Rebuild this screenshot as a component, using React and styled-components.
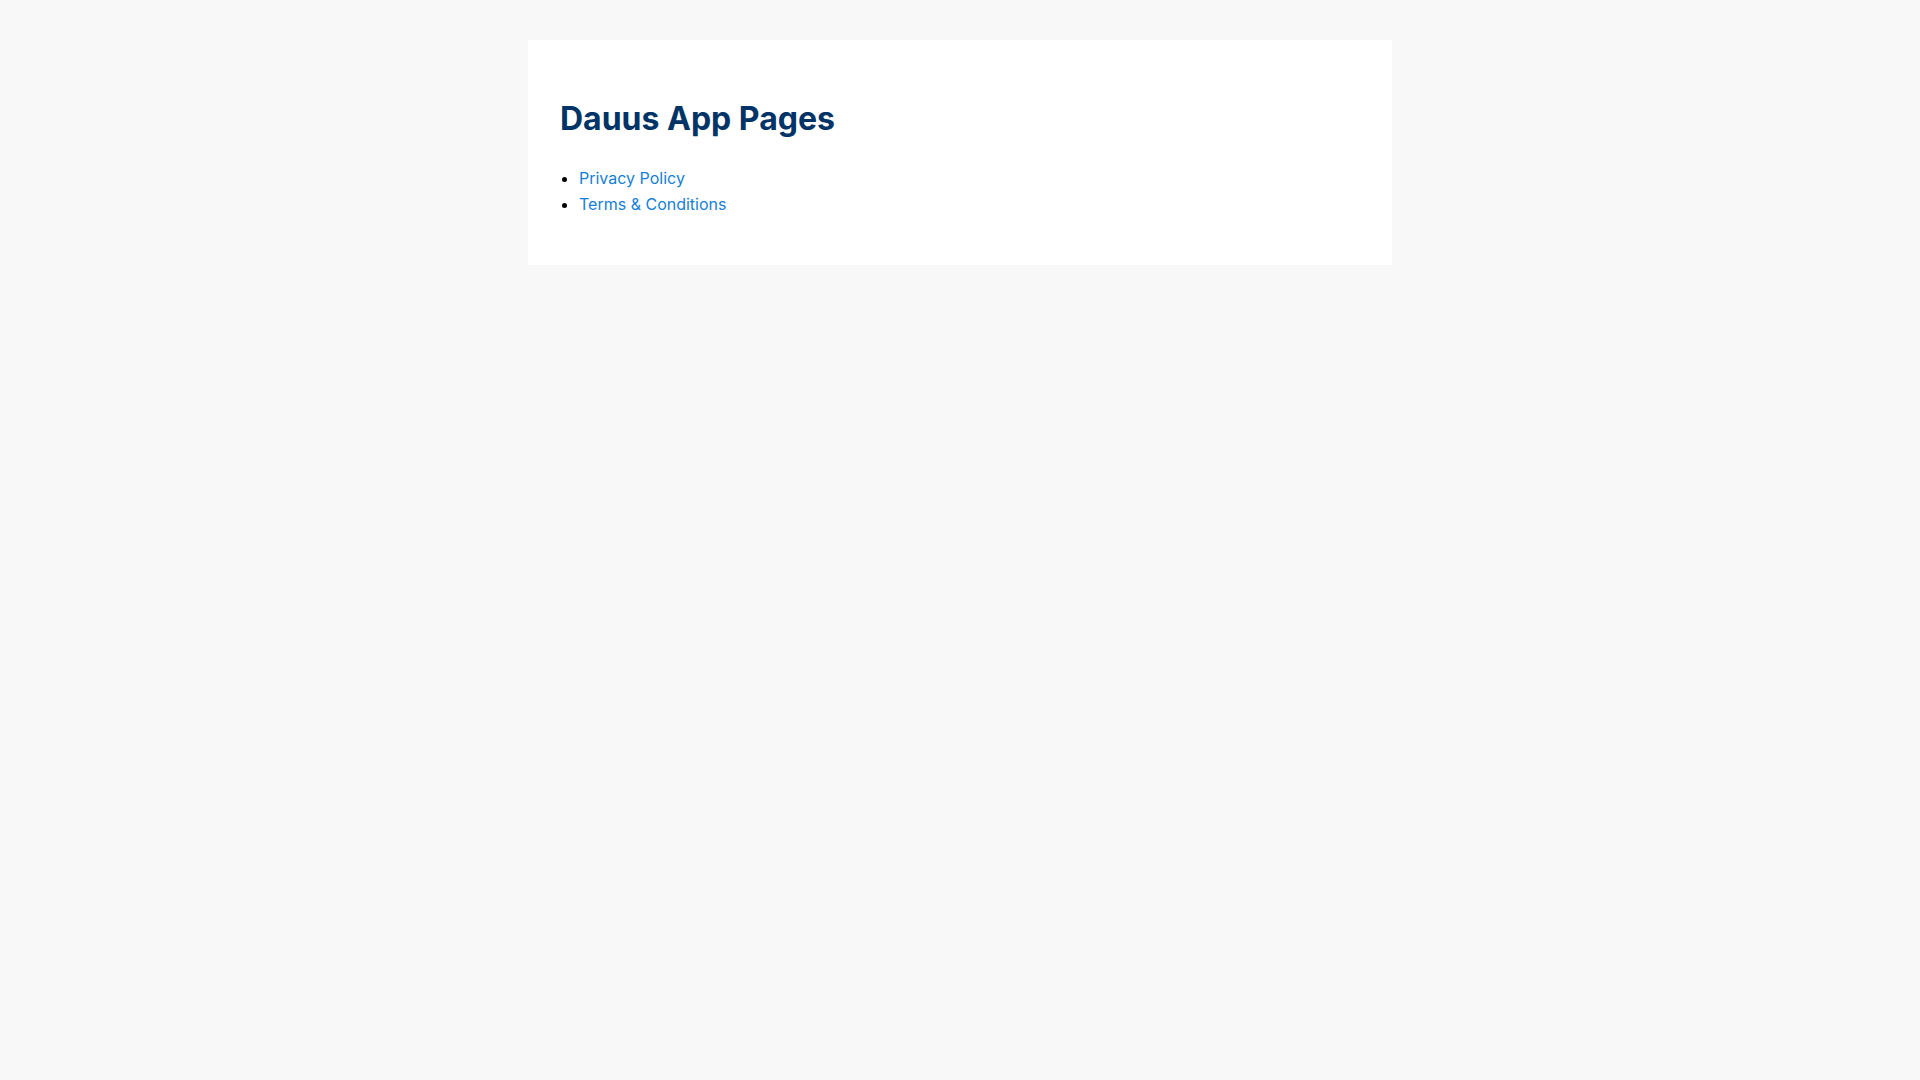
import React from 'react';
import styled, { createGlobalStyle } from 'styled-components';

const GlobalStyle = createGlobalStyle`
  body {
    margin: 0;
    background: #f8f8f8;
    font-family: Inter, "Noto Sans", sans-serif;
    line-height: 1.6;
    color: #000;
  }
`;

const Page = styled.div`
  padding: 40px 20px;
`;

const Card = styled.main`
  max-width: 800px;
  margin: 0 auto;
  padding: 32px;
  background: #fff;
`;

const Title = styled.h1`
  color: #003366;
  font-size: 32px;
  font-weight: 700;
  margin: 0.67em 0;
`;

const LinkList = styled.ul`
  margin: 16px 0;
  padding-left: 19px;
`;

const LinkItem = styled.li`
  font-size: 16px;
`;

const PageLink = styled.a`
  color: #1580d6;
  text-decoration: none;
`;

const pages = [
  { label: 'Privacy Policy', href: '#privacy' },
  { label: 'Terms & Conditions', href: '#terms' }
];

export default function App() {
  return (
    <Page>
      <GlobalStyle />
      <Card>
        <Title>Dauus App Pages</Title>
        <LinkList>
          {pages.map((p) => (
            <LinkItem key={p.href}>
              <PageLink href={p.href}>{p.label}</PageLink>
            </LinkItem>
          ))}
        </LinkList>
      </Card>
    </Page>
  );
}
